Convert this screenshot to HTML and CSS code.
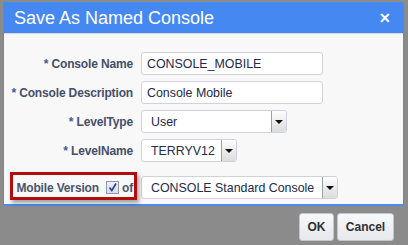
FILE: index.html
```html
<!DOCTYPE html>
<html>
<head>
<meta charset="utf-8">
<link rel="stylesheet" href="styles.css">
</head>
<body>
<div class="screen">
  <div class="dialog">
    <div class="titlebar">
      <span class="title">Save As Named Console</span>
      <span class="close">&#x2715;</span>
    </div>
    <div class="content">
      <div class="form">
        <label class="lbl"><span class="req">*</span> Console Name</label>
        <div class="input wide">CONSOLE_MOBILE</div>
        <label class="lbl"><span class="req">*</span> Console Description</label>
        <div class="input wide">Console Mobile</div>
        <label class="lbl"><span class="req">*</span> LevelType</label>
        <div class="select type"><span class="val">User</span><span class="arrow"></span></div>
        <label class="lbl"><span class="req">*</span> LevelName</label>
        <div class="select name"><span class="val">TERRYV12</span><span class="arrow"></span></div>
        <label class="lbl mobile">Mobile Version <span class="check"><svg width="11" height="11" viewBox="0 0 11 11"><path d="M2.5 5.5 L4.8 8.5 L9 1.5" fill="none" stroke="#2b3f9c" stroke-width="1.6"/></svg></span> of</label>
        <div class="select console"><span class="val">CONSOLE Standard Console</span><span class="arrow"></span></div>
        <div class="highlight"></div>
      </div>
    </div>
  </div>
  <div class="buttons">
    <button class="btn ok">OK</button>
    <button class="btn cancel">Cancel</button>
  </div>
</div>
</body>
</html>
```
FILE: styles.css
```css
html, body {
  margin: 0;
  padding: 0;
}
body {
  width: 408px;
  height: 245px;
  background: #8b8b8b;
  font-family: "Liberation Sans", Arial, sans-serif;
  overflow: hidden;
}
.screen {
  padding: 2px 3px 0 3px;
  height: 243px;
}
.dialog {
  border: 1px solid #4a8bf0;
  border-bottom-width: 2px;
  background: #f8f8f8;
  width: 399px;
}
.titlebar {
  height: 30px;
  background: #4588f2;
  border-bottom: 1px solid #d6d9de;
  display: flex;
  align-items: center;
  justify-content: space-between;
  padding: 0 12px 0 10px;
}
.title {
  color: #fff;
  font-size: 18px;
  padding-top: 1px;
}
.close {
  color: #fff;
  font-size: 14px;
  font-weight: bold;
}
.content {
  padding: 18px 0 4px 0;
  height: 148px;
}
.form {
  position: relative;
  display: grid;
  grid-template-columns: 129px auto;
  column-gap: 8px;
  row-gap: 6px;
  align-items: center;
  justify-items: start;
}
.lbl {
  justify-self: end;
  font-size: 12px;
  letter-spacing: -0.15px;
  font-weight: bold;
  color: #454f6a;
  white-space: nowrap;
}
.req {
  color: #3f5a9a;
}
.lbl.mobile {
  margin-top: 8px;
  display: flex;
  align-items: center;
  gap: 3px;
  color: #4a5470;
}
.check {
  display: inline-block;
  width: 11px;
  height: 11px;
  border: 1px solid #8c98b0;
  background: linear-gradient(#eef1f6, #d6dce8);
  margin-left: 4px;
}
.check svg { display: block; }
.input, .select {
  height: 23px;
  box-sizing: border-box;
  border: 1px solid #cfd3d8;
  border-radius: 3px;
  background: #fff;
  font-size: 12.4px;
  color: #232a4c;
  display: flex;
  align-items: center;
}
.input {
  width: 182px;
  padding-left: 5px;
}
.select {
  padding-left: 9px;
  justify-content: space-between;
}
.select .arrow {
  width: 15px;
  height: 21px;
  box-sizing: border-box;
  border-left: 1px solid #9aa0a8;
  background: linear-gradient(#fdfdfd, #dcdcdc);
  position: relative;
  border-radius: 0 2px 2px 0;
}
.select .arrow::after {
  content: "";
  position: absolute;
  left: 3px;
  top: 9px;
  border-left: 4px solid transparent;
  border-right: 4px solid transparent;
  border-top: 4px solid #111;
}
.select.type { width: 146px; }
.select.name { width: 96px; }
.select.console { width: 197px; margin-top: 8px; }
.highlight {
  position: absolute;
  left: 6px;
  top: 120px;
  width: 121px;
  height: 22px;
  border: 3px solid #b10d0f;
  box-shadow: 2px 3px 4px rgba(0,0,0,0.35);
}
.buttons {
  display: flex;
  justify-content: flex-end;
  gap: 3px;
  padding: 7px 11px 0 0;
}
.btn {
  height: 28px;
  border: 1px solid #c4c6ca;
  border-radius: 3px;
  background: linear-gradient(#f7f8fa, #e6e8ec);
  font-family: "Liberation Sans", Arial, sans-serif;
  font-size: 12px;
  font-weight: bold;
  color: #2d2f36;
  padding: 0;
}
.ok { width: 35px; }
.cancel { width: 57px; }
```
